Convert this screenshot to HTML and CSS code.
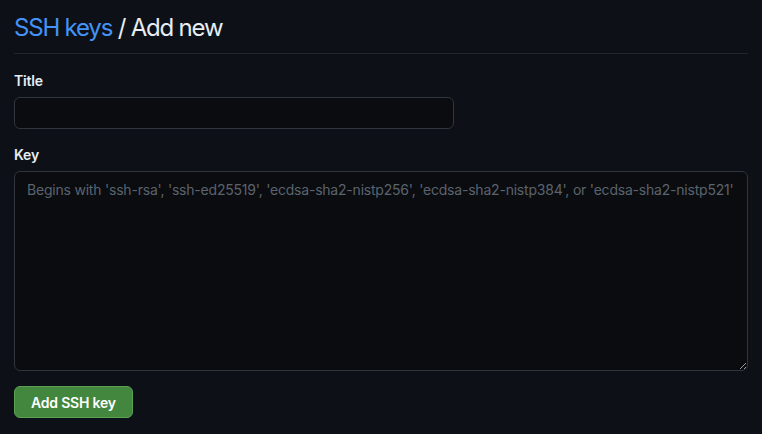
FILE: index.html
```html
<!DOCTYPE html>
<html lang="en">
<head>
<meta charset="utf-8">
<link rel="stylesheet" href="styles.css">
</head>
<body>
<main class="page">
  <div class="subhead">
    <h2 class="subhead-heading"><a class="crumb" href="#">SSH keys</a> / Add new</h2>
  </div>
  <form class="form">
    <div class="form-group">
      <label class="label" for="title">Title</label>
      <input class="input title-input" id="title" type="text">
    </div>
    <div class="form-group form-group-key">
      <label class="label" for="key">Key</label>
      <textarea class="input key-input" id="key" placeholder="Begins with 'ssh-rsa', 'ssh-ed25519', 'ecdsa-sha2-nistp256', 'ecdsa-sha2-nistp384', or 'ecdsa-sha2-nistp521'"></textarea>
    </div>
    <div class="actions">
      <button class="btn-primary" type="button">Add SSH key</button>
    </div>
  </form>
</main>
</body>
</html>
```

FILE: styles.css
```css
* { box-sizing: border-box; }
html, body { margin: 0; padding: 0; background: #0d1117; }
body {
  font-family: Inter, "Noto Sans", "Liberation Sans", sans-serif;
  color: #e6edf3;
  font-size: 14px;
  line-height: 1.5;
  letter-spacing: -0.015em;
}
.page {
  padding: 10px 14px 0 14px;
}
.subhead {
  border-bottom: 1px solid #21262d;
  padding-bottom: 7px;
}
.subhead-heading {
  margin: 0;
  font-size: 24px;
  font-weight: 400;
  line-height: 1.5;
  color: #e6edf3;
  letter-spacing: -0.05em;
}
.crumb {
  color: #4493f8;
  text-decoration: none;
}
.form {
  display: flex;
  flex-direction: column;
}
.form-group {
  display: flex;
  flex-direction: column;
  margin-top: 16px;
}
.form-group-key {
  margin-top: 15px;
}
.label {
  font-weight: 600;
  font-size: 14px;
  line-height: 21px;
  margin-bottom: 6px;
}
.input {
  font-family: inherit;
  font-size: 14px;
  line-height: 20px;
  letter-spacing: -0.015em;
  color: #e6edf3;
  background: #0a0c10;
  border: 1px solid #30363d;
  border-radius: 6px;
  padding: 5px 12px;
  outline: none;
}
.title-input {
  width: 440px;
  height: 32px;
}
.key-input {
  width: 100%;
  height: 200px;
  padding: 8px 6px 8px 12px;
  resize: vertical;
}
.key-input::placeholder {
  color: #5b636d;
  opacity: 1;
}
.actions {
  margin-top: 15px;
}
.btn-primary {
  font-family: inherit;
  font-size: 14px;
  font-weight: 600;
  letter-spacing: -0.015em;
  color: #ffffff;
  background: #43873f;
  border: 1px solid #5aa154;
  border-radius: 6px;
  height: 32px;
  padding: 0 16px;
  cursor: pointer;
}
```
